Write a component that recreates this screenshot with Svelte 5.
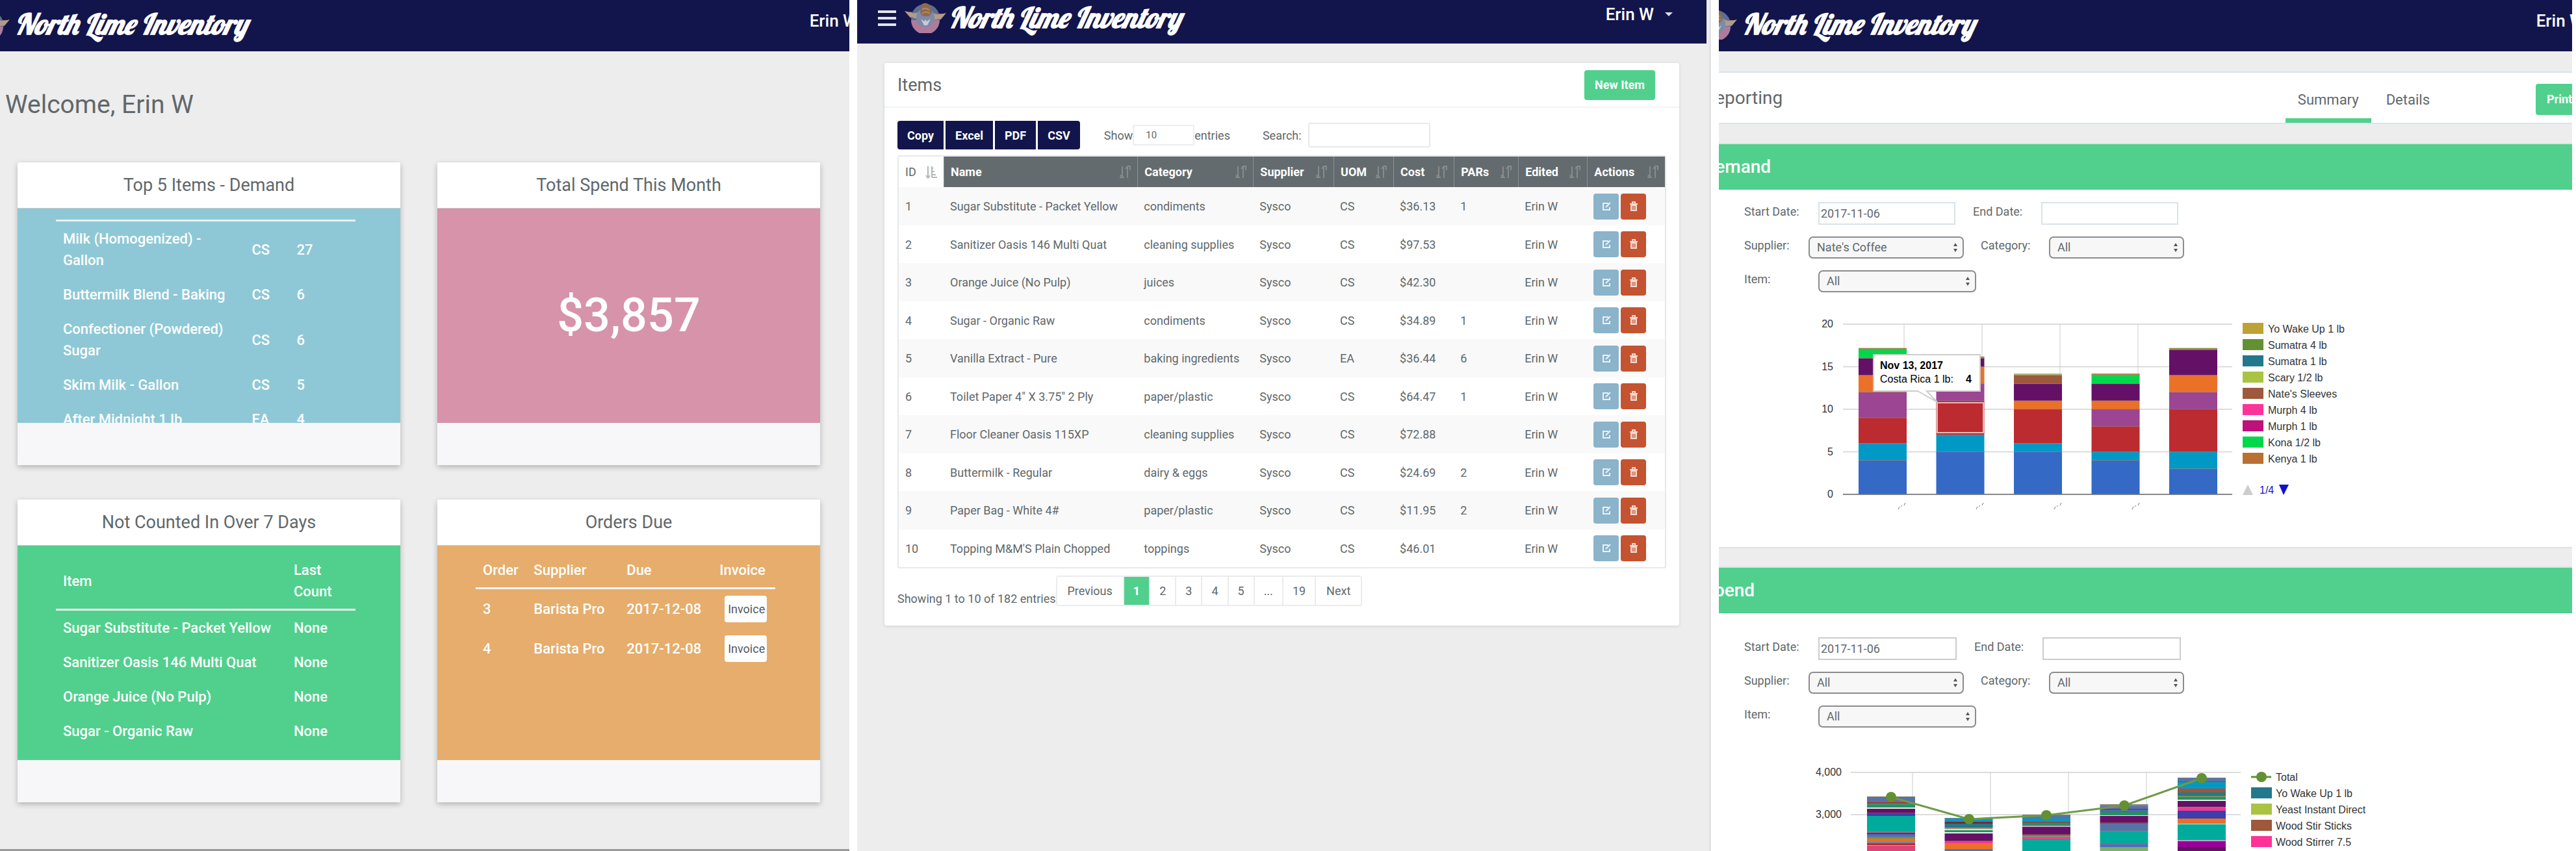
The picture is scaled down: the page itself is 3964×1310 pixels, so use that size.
<script>
  const demand = [
    ['Milk (Homogenized) - Gallon', 'CS', 27],
    ['Buttermilk Blend - Baking', 'CS', 6],
    ['Confectioner (Powdered) Sugar', 'CS', 6],
    ['Skim Milk - Gallon', 'CS', 5],
    ['After Midnight 1 lb', 'EA', 4],
  ];
  const notCounted = [
    'Sugar Substitute - Packet Yellow',
    'Sanitizer Oasis 146 Multi Quat',
    'Orange Juice (No Pulp)',
    'Sugar - Organic Raw',
  ];
  const orders = [
    [3, 'Barista Pro', '2017-12-08'],
    [4, 'Barista Pro', '2017-12-08'],
  ];
  const headers = ['ID', 'Name', 'Category', 'Supplier', 'UOM', 'Cost', 'PARs', 'Edited', 'Actions'];
  const items = [
    [1, 'Sugar Substitute - Packet Yellow', 'condiments', 'Sysco', 'CS', '$36.13', '1', 'Erin W'],
    [2, 'Sanitizer Oasis 146 Multi Quat', 'cleaning supplies', 'Sysco', 'CS', '$97.53', '', 'Erin W'],
    [3, 'Orange Juice (No Pulp)', 'juices', 'Sysco', 'CS', '$42.30', '', 'Erin W'],
    [4, 'Sugar - Organic Raw', 'condiments', 'Sysco', 'CS', '$34.89', '1', 'Erin W'],
    [5, 'Vanilla Extract - Pure', 'baking ingredients', 'Sysco', 'EA', '$36.44', '6', 'Erin W'],
    [6, 'Toilet Paper 4" X 3.75" 2 Ply', 'paper/plastic', 'Sysco', 'CS', '$64.47', '1', 'Erin W'],
    [7, 'Floor Cleaner Oasis 115XP', 'cleaning supplies', 'Sysco', 'CS', '$72.88', '', 'Erin W'],
    [8, 'Buttermilk - Regular', 'dairy & eggs', 'Sysco', 'CS', '$24.69', '2', 'Erin W'],
    [9, 'Paper Bag - White 4#', 'paper/plastic', 'Sysco', 'CS', '$11.95', '2', 'Erin W'],
    [10, "Topping M&M'S Plain Chopped", 'toppings', 'Sysco', 'CS', '$46.01', '', 'Erin W'],
  ];
  const pages = ['Previous', '1', '2', '3', '4', '5', '...', '19', 'Next'];

  const blue = '#3469c6', cyan = '#0099c6', red = '#bc2b2f', purple = '#9b4593';
  const orange = '#eb7128', plum = '#651067', green = '#00d84b', olive = '#8f8f45', brown = '#9e583c';
  const stacks = [
    [[blue, 4], [cyan, 2], [red, 3], [purple, 3], [orange, 2], [plum, 2], [green, 1], [olive, 0.2]],
    [[blue, 5], [cyan, 2], [red, 4], [purple, 2], [orange, 2], [plum, 1], [olive, 0.2]],
    [[blue, 5], [cyan, 1], [red, 4], [orange, 1], [plum, 2], [brown, 1], ['#a9b873', 0.2]],
    [[blue, 4], [cyan, 1], [red, 3], [purple, 2], [orange, 1], [plum, 2], [green, 1], ['#a28c55', 0.2]],
    [[blue, 3], [cyan, 2], [red, 5], [purple, 2], [orange, 2], [plum, 3], [olive, 0.2]],
  ];
  const unit = 13.1;
  const demandBars = stacks.map((stack, i) => {
    let total = 0;
    return {
      x: 60 + i * 119.5,
      parts: stack.map(([fill, n]) => {
        total += n;
        return { fill, y: 283 - total * unit, h: n * unit };
      }),
    };
  });
  const demandLegend = [
    ['Yo Wake Up 1 lb', '#bea237'], ['Sumatra 4 lb', '#649034'], ['Sumatra 1 lb', '#23788c'],
    ['Scary 1/2 lb', '#a9c343'], ["Nate's Sleeves", '#9e583c'], ['Murph 4 lb', '#fd3399'],
    ['Murph 1 lb', '#bd117c'], ['Kona 1/2 lb', '#00d84b'], ['Kenya 1 lb', '#b97030'],
  ];

  const slate = '#5574a5', teal = '#00ab9b', jade = '#229367', gray = '#8b7f78', sky = '#0099c6';
  const spendStacks = [
    { top: 48, parts: [[gray, 1], [slate, 8], [red, 2], [gray, 1], [jade, 5], ['#e4efe9', 2], [plum, 6], ['#8a4a56', 1], ['#3b3eac', 4], [teal, 24], [gray, 2], ['#990099', 2], ['#4372c4', 4], ['#7b8f45', 3], [orange, 4], ['#8084a0', 3], [red, 3], ['#c9a58d', 1], ['#dd4477', 60]] },
    { top: 81, parts: [[gray, 1], [sky, 5], ['#7b2c22', 3], ['#23788c', 6], ['#a88a70', 2], ['#cfe6dc', 2], [jade, 3], ['#e4efe9', 2], [plum, 11], ['#8a4a56', 1], ['#fd3399', 3], [orange, 9], [slate, 60]] },
    { top: 76, parts: [[gray, 1], [slate, 5], [sky, 5], ['#84504a', 2], [jade, 4], ['#c7a4c3', 2], [plum, 11], ['#8a4a56', 2], ['#7b8f78', 3], ['#dd4488', 3], [teal, 60]] },
    { top: 60, parts: [[gray, 3], [slate, 4], ['#6633cc', 2], ['#5574a5', 2], ['#84504a', 1], [jade, 5], ['#e4efe9', 1], [plum, 10], ['#8a4a56', 2], [slate, 11], [gray, 1], [teal, 18], ['#8a6a80', 2], ['#4372c4', 4], ['#7fb06a', 60]] },
    { top: 19, parts: [[gray, 1], [slate, 5], ['#84504a', 1], [sky, 10], ['#c8452c', 3], ['#7c6440', 3], ['#23788c', 5], ['#7b8f55', 2], [jade, 4], ['#e4efe9', 2], [plum, 9], ['#7b8f55', 2], ['#fd3399', 4], ['#3b3eac', 12], [orange, 8], ['#c5e0dc', 1], [teal, 24], ['#b9a6cc', 2], ['#990099', 9], [plum, 60]] },
  ];
  const spendBars = spendStacks.map(({ top, parts }, i) => {
    let y = top;
    return {
      x: 53 + i * 119.5,
      parts: parts.map(([fill, h]) => {
        const part = { fill, y, h };
        y += h;
        return part;
      }),
    };
  });
  const totals = [[90, 49], [210, 83], [329, 77], [449, 62], [568, 20]];
  const spendLegend = [
    ['Yo Wake Up 1 lb', '#23788c'], ['Yeast Instant Direct', '#a9c343'],
    ['Wood Stir Sticks', '#9e583c'], ['Wood Stirrer 7.5', '#fd3399'],
  ];
  const reports = [
    { id: 'demand', title: 'Demand', supplier: "Nate's Coffee" },
    { id: 'spend', title: 'Spend', supplier: 'All' },
  ];
</script>

{#snippet brand()}
  <a class="brand" href="#home">
    <svg class="badge" viewBox="0 0 64 48" aria-hidden="true">
      <path d="M0 14 Q10 17 20 15 L22 27 Q10 27 6 21 Z" fill="#b49a88" />
      <path d="M64 17 Q54 20 44 16 L42 29 Q54 31 59 23 Z" fill="#b49a88" />
      <circle cx="32" cy="25" r="22" fill="#5b6f92" />
      <path d="M10 28 A22 22 0 0 0 54 28 L45 28 Q42 38 32 38 Q22 38 19 28 Z" fill="#ae7b9d" />
      <path d="M2 15 Q12 19 21 16 L21 26 Q10 26 2 15 Z M62 18 Q54 21 44 17 L44 27 Q56 29 62 18 Z" fill="#b49a88" />
      <circle cx="32" cy="24" r="14" fill="#7d8ba8" />
      <path d="M26 4 Q32 -1 39 5 L42 16 Q40 23 32 22 Q24 22 24 14 Z" fill="#8a6a55" />
      <path d="M27 12 Q32 7 38 13 M27 18 Q33 13 39 18" stroke="#b78a55" stroke-width="2" fill="none" />
      <path d="M25 26 L30 36 H35 L40 26 L34 30 L32 27 L30 30 Z" fill="#c5cbd8" />
    </svg>
    <span>North Lime Inventory</span>
  </a>
{/snippet}

{#snippet picker(id, value, size)}
  <span class="picker {size}">
    <select {id}><option>{value}</option></select>
    <svg viewBox="0 0 8 16" aria-hidden="true"><path d="M4 1 L7 6 H1 Z M4 15 L1 10 H7 Z" fill="#555" /></svg>
  </span>
{/snippet}

{#snippet cardHead(title)}
  <h2>{title}</h2>
{/snippet}

<div class="board">
  <section class="screen home">
    <header class="topbar clipped">
      {@render brand()}
      <a class="user" href="#account">Erin W</a>
    </header>
    <h1>Welcome, Erin W</h1>
    <div class="cards">
      <article class="card">
        {@render cardHead('Top 5 Items - Demand')}
        <div class="body sky scrolled">
          <table class="plain ruled">
            <colgroup><col class="c64" /><col class="c15" /><col /></colgroup>
            <tbody>
              {#each demand as [name, uom, count]}
                <tr><td>{name}</td><td>{uom}</td><td>{count}</td></tr>
              {/each}
            </tbody>
          </table>
        </div>
        <footer></footer>
      </article>
      <article class="card">
        {@render cardHead('Total Spend This Month')}
        <div class="body pink"><strong>$3,857</strong></div>
        <footer></footer>
      </article>
      <article class="card">
        {@render cardHead('Not Counted In Over 7 Days')}
        <div class="body green">
          <table class="plain">
            <colgroup><col class="c74" /><col /></colgroup>
            <thead><tr><th>Item</th><th>Last<br />Count</th></tr></thead>
            <tbody>
              {#each notCounted as name}
                <tr><td>{name}</td><td>None</td></tr>
              {/each}
            </tbody>
          </table>
        </div>
        <footer></footer>
      </article>
      <article class="card">
        {@render cardHead('Orders Due')}
        <div class="body amber">
          <table class="plain">
            <colgroup><col class="c17" /><col class="c30" /><col class="c30" /><col /></colgroup>
            <thead><tr><th>Order</th><th>Supplier</th><th>Due</th><th>Invoice</th></tr></thead>
            <tbody>
              {#each orders as [id, supplier, due]}
                <tr><td>{id}</td><td>{supplier}</td><td>{due}</td><td class="act"><button class="invoice">Invoice</button></td></tr>
              {/each}
            </tbody>
          </table>
        </div>
        <footer></footer>
      </article>
    </div>
    <div class="edge"></div>
  </section>

  <section class="screen inventory">
    <header class="topbar short">
      <button class="menu" aria-label="Menu">
        <svg viewBox="0 0 28 26" aria-hidden="true"><path d="M0 3 H28 M0 13 H28 M0 23 H28" stroke="#e4e4ec" stroke-width="4" /></svg>
      </button>
      {@render brand()}
      <a class="user" href="#account">Erin W
        <svg viewBox="0 0 12 8" aria-hidden="true"><path d="M0 1 H12 L6 7 Z" fill="#dcdce6" /></svg>
      </a>
    </header>
    <div class="sheet">
      <div class="sheet-head">
        <h2>Items</h2>
        <button class="go">New Item</button>
      </div>
      <div class="sheet-body">
        <div class="tools">
          <div class="exports">
            <button>Copy</button><button>Excel</button><button>PDF</button><button>CSV</button>
          </div>
          <label class="show">Show<select><option>10</option></select>entries</label>
          <label class="search">Search:<input type="search" /></label>
        </div>
        <table class="grid">
          <colgroup>
            <col class="w-id" /><col class="w-name" /><col class="w-cat" /><col class="w-sup" /><col class="w-uom" />
            <col class="w-cost" /><col class="w-par" /><col class="w-edit" /><col class="w-act" />
          </colgroup>
          <thead>
            <tr>
              {#each headers as name, i}
                <th class:sorted={i === 0}>
                  <span class="th">{name}
                    {#if i === 0}
                      <svg viewBox="0 0 18 20" aria-hidden="true"><path d="M4 1 V18 M1 15 L4 19 L7 15 M10 1 V18 M10 4 H12 M10 9 H14 M10 14 H16 M10 18 H18" stroke="#b4b8ba" stroke-width="2" fill="none" /></svg>
                    {:else}
                      <svg viewBox="0 0 18 20" aria-hidden="true"><path d="M5 1 V18 M1 18 H8 M2 14 L5 18 M13 1 V19 M10 5 L13 1 H17 V7" stroke="#868c8e" stroke-width="2" fill="none" /></svg>
                    {/if}
                  </span>
                </th>
              {/each}
            </tr>
          </thead>
          <tbody>
            {#each items as row}
              <tr>
                {#each row as cell}<td>{cell}</td>{/each}
                <td>
                  <span class="acts">
                    <button class="edit" aria-label="Edit item">
                      <svg viewBox="0 0 16 16" aria-hidden="true"><path d="M11 3 H3 V13 H13 V9" stroke="#e9f2f6" stroke-width="2" fill="none" /><path d="M7 9 L14 2" stroke="#e9f2f6" stroke-width="2" /></svg>
                    </button>
                    <button class="trash" aria-label="Delete item">
                      <svg viewBox="0 0 16 16" aria-hidden="true"><path d="M2 4 H14 M6 3 V1 H10 V3" stroke="#f3d7cd" stroke-width="2" fill="none" /><path d="M3 5 H13 V15 H3 Z" fill="#f3d7cd" /><path d="M6 7 V13 M8 7 V13 M10 7 V13" stroke="#c45331" /></svg>
                    </button>
                  </span>
                </td>
              </tr>
            {/each}
          </tbody>
        </table>
        <div class="pager">
          <span>Showing 1 to 10 of 182 entries</span>
          <nav aria-label="Pages">
            {#each pages as page}
              <button class:on={page === '1'} class:word={page.length > 3}>{page}</button>
            {/each}
          </nav>
        </div>
      </div>
    </div>
  </section>

  <section class="screen reporting">
    <header class="topbar clipped far">
      {@render brand()}
      <a class="user" href="#account">Erin W</a>
    </header>
    <div class="title">
      <h1>Reporting</h1>
      <nav>
        <a class="tab on" href="#summary">Summary</a>
        <a class="tab" href="#details">Details</a>
      </nav>
      <button class="go print">Print</button>
    </div>
    {#each reports as report}
      <article class="report {report.id}">
        <h2>{report.title}</h2>
        <form class="filters">
          <div class="line">
            <label class="wide" for="{report.id}-start">Start Date:</label>
            <input id="{report.id}-start" value="2017-11-06" />
            <label for="{report.id}-end" class="end">End Date:</label>
            <input id="{report.id}-end" />
          </div>
          <div class="line">
            <label class="mid" for="{report.id}-supplier">Supplier:</label>
            {@render picker(`${report.id}-supplier`, report.supplier, 'm')}
            <label class="cat" for="{report.id}-category">Category:</label>
            {@render picker(`${report.id}-category`, 'All', 's')}
          </div>
          <div class="line">
            <label class="wide" for="{report.id}-item">Item:</label>
            {@render picker(`${report.id}-item`, 'All', 'l')}
          </div>
        </form>
        {#if report.id === 'demand'}
          <svg class="chart" width="860" height="320" viewBox="0 0 860 320" role="img" aria-label="Demand by week">
            {#each [20, 15, 10, 5, 0] as tick, i}
              <line x1="36" x2="635" y1={21 + i * 65.5} y2={21 + i * 65.5} stroke={tick ? '#dcdcdc' : '#888'} stroke-width="2" />
              <text x="21" y={26 + i * 65.5} text-anchor="end">{tick}</text>
            {/each}
            {#each [130, 250, 370, 490] as x}
              <line x1={x} x2={x} y1="21" y2="282" stroke="#ccc" />
              <path d="M{x - 9} 306 l2 -4 M{x - 5} 302 l2 -2 M{x} 300 l2 -4" stroke="#777" />
            {/each}
            {#each demandBars as bar}
              {#each bar.parts as part}
                <rect x={bar.x} y={part.y} width="74" height={part.h} fill={part.fill} />
              {/each}
              {#each bar.parts.slice(0, -1) as part}
                <line x1={bar.x} x2={bar.x + 74} y1={part.y} y2={part.y} stroke="#90766f" stroke-opacity="0.7" />
              {/each}
            {/each}
            <line x1="36" x2="635" y1="283" y2="283" stroke="#888" stroke-opacity="0.6" />
            <rect x="181" y="142" width="71" height="46" fill="none" stroke="#e6b9ba" stroke-width="2" />
            <path d="M83 68 H247 V124 H165 L181 141 L151 124 H83 Z" fill="#fff" stroke="#ccc" stroke-width="2" />
            <text class="dark" x="93" y="90" font-weight="700">Nov 13, 2017</text>
            <text class="dark" x="93" y="111">Costa Rica 1 lb:</text>
            <text class="dark" x="225" y="111" font-weight="700">4</text>
            {#each demandLegend as [name, fill], i}
              <rect x="651" y={19 + i * 25} width="32" height="17" {fill} />
              <text x="690" y={34 + i * 25}>{name}</text>
            {/each}
            <path d="M651 284 L659 268 L667 284 Z" fill="#ccc" />
            <text class="count" x="677" y="282">1/4</text>
            <path d="M707 268 H722 L714 284 Z" fill="#1111cc" />
          </svg>
        {:else}
          <svg class="chart" width="860" height="320" viewBox="0 0 860 320" role="img" aria-label="Spend by week">
            {#each ['4,000', '3,000', '2,000', '1,000', '0'] as tick, i}
              <line x1="28" x2="628" y1={11 + i * 65} y2={11 + i * 65} stroke="#dcdcdc" stroke-width="2" />
              <text x="14" y={16 + i * 65} text-anchor="end">{tick}</text>
            {/each}
            {#each [123, 243, 363, 483] as x}
              <line x1={x} x2={x} y1="11" y2="271" stroke="#ccc" />
            {/each}
            {#each spendBars as bar}
              {#each bar.parts as part}
                <rect x={bar.x} y={part.y} width="74" height={part.h} fill={part.fill} />
              {/each}
            {/each}
            <polyline points={totals.map((p) => p.join(',')).join(' ')} fill="none" stroke="#6f9b46" stroke-width="3" />
            {#each totals as [x, y]}
              <circle cx={x} cy={y} r="8" fill="#649034" />
            {/each}
            <line x1="644" x2="675" y1="18" y2="18" stroke="#649034" stroke-width="3" />
            <circle cx="660" cy="18" r="8" fill="#649034" />
            <text x="682" y="24">Total</text>
            {#each spendLegend as [name, fill], i}
              <rect x="644" y={34 + i * 25} width="32" height="17" {fill} />
              <text x="682" y={49 + i * 25}>{name}</text>
            {/each}
          </svg>
        {/if}
      </article>
    {/each}
  </section>
</div>

<style>
  :global(body) {
    margin: 0;
    background: #fff;
    font-family: Roboto, "Liberation Sans", sans-serif;
    color: #5f686b;
  }
  .board {
    display: grid;
    grid-template-columns: 1307fr 1314fr 1313fr;
    column-gap: 12px;
    box-sizing: border-box;
    height: 100vh;
    padding-right: 6px;
    overflow: hidden;
  }
  .screen {
    display: flex;
    flex-direction: column;
    min-width: 0;
    min-height: 0;
    overflow: hidden;
    background: #ededed;
    font-size: 18px;
  }
  .inventory { border-right: 3px solid #e3e3e3; }
  h1, h2 { margin: 0; font-weight: 400; }
  a { color: inherit; text-decoration: none; }
  button, input, select { font: inherit; color: inherit; margin: 0; box-sizing: border-box; }
  button { border: 0; cursor: pointer; }
  table { border-collapse: collapse; table-layout: fixed; width: 100%; }
  th, td { text-align: left; }

  .topbar {
    display: flex;
    align-items: flex-start;
    justify-content: space-between;
    flex: none;
    box-sizing: border-box;
    height: 79px;
    padding: 12px 0 0;
    background: #12154b;
    color: #fff;
    white-space: nowrap;
  }
  .brand {
    display: flex;
    align-items: center;
    gap: 8px;
    height: 50px;
    font: italic 700 44px/50px Lobster, "Liberation Serif", serif;
  }
  .badge { width: 64px; height: 48px; }
  .user { font-size: 26px; line-height: 40px; font-weight: 500; }
  .clipped .brand { margin-left: -49px; }
  .clipped .user { margin-right: -13px; }
  .far .brand { margin-left: -36px; }
  .far .user { margin-right: -19px; }
  .short { height: 67px; margin-right: 4px; padding: 2px 52px 0 32px; justify-content: flex-start; }
  .short .brand { margin-left: 13px; gap: 4px; }
  .short .user { margin-left: auto; display: flex; align-items: center; gap: 17px; }
  .short .user svg { width: 12px; height: 8px; }
  .menu { background: none; padding: 12px 0 0; height: 40px; }
  .menu svg { display: block; width: 28px; height: 26px; }

  .home h1 { font-size: 39px; line-height: 50px; padding: 57px 8px 64px; }
  .cards {
    display: grid;
    grid-template-columns: 1fr 1fr;
    gap: 53px 57px;
    padding: 0 45px 0 27px;
  }
  .card {
    background: #fff;
    box-shadow: 0 3px 8px rgba(0, 0, 0, 0.25);
    border-radius: 2px;
  }
  .card h2 { font-size: 27px; line-height: 70px; text-align: center; }
  .card footer { height: 65px; background: #f7f7f9; }
  .body {
    box-sizing: border-box;
    height: 331px;
    padding: 12px 69px 0 59px;
    overflow: hidden;
    color: #fff;
    box-shadow: inset 0 1px #ccc;
  }
  .scrolled { padding-top: 18px; }
  .sky { background: #8ec8d6; }
  .pink { background: #d693a9; display: grid; place-items: center; padding: 0; }
  .green { background: #50d08c; }
  .amber { background: #e6ad6c; }
  .pink strong { font-size: 72px; font-weight: 500; }
  .plain { font-size: 22px; line-height: 33px; font-weight: 500; }
  .plain th { padding: 10px 0 10px 11px; font-weight: 500; border-bottom: 3px solid #f4f4f4; }
  .plain td { padding: 10px 0 10px 11px; }
  .ruled { border-top: 3px solid #e6f1f4; }
  .plain .act { padding: 10px 0 10px 19px; }
  .c64 { width: 63%; }
  .c15 { width: 15%; }
  .c74 { width: 77%; }
  .c17 { width: 17%; }
  .c30 { width: 31%; }
  .invoice {
    display: block;
    width: 65px;
    height: 41px;
    padding: 0 0 0 2px;
    background: #fff;
    border-radius: 4px;
    font-size: 18px;
    font-weight: 400;
    color: #55595c;
  }
  .edge { margin-top: auto; height: 3px; background: #999; }

  .go {
    background: #50d08c;
    color: #fff;
    border-radius: 4px;
    font-weight: 700;
    height: 46px;
  }
  .sheet {
    margin: 30px 46px 0 42px;
    background: #fff;
    border-radius: 3px;
    box-shadow: 0 1px 4px rgba(150, 165, 175, 0.4);
  }
  .sheet-head {
    display: flex;
    align-items: center;
    justify-content: space-between;
    height: 67px;
    padding: 0 37px 0 20px;
    border-bottom: 2px solid #eff3f7;
  }
  .sheet-head h2 { font-size: 27px; }
  .sheet-head .go { width: 109px; }
  .sheet-body { padding: 20px 20px 30px; }
  .tools { display: flex; align-items: center; }
  .exports { display: flex; gap: 3px; border-radius: 4px; overflow: hidden; }
  .exports button {
    height: 44px;
    padding: 0 15px;
    background: #12154b;
    color: #fff;
    font-weight: 700;
  }
  .show, .search { display: flex; align-items: center; }
  .show { margin-left: 37px; }
  .search { margin-left: 50px; gap: 10px; }
  .show select {
    appearance: none;
    width: 95px;
    height: 32px;
    padding: 0 18px;
    border: 2px solid #eceded;
    background: #fff;
    border-radius: 2px;
    font-size: 15px;
  }
  .search input {
    appearance: none;
    width: 188px;
    height: 38px;
    border: 2px solid #e8e9ea;
    border-radius: 3px;
    background: #fff;
  }
  .grid { margin-top: 9px; border: 2px solid #e6e8e9; border-collapse: separate; border-spacing: 0; border-radius: 3px; font-size: 18px; }
  .grid th {
    height: 47px;
    padding: 0 10px;
    background: #646b6e;
    color: #fff;
    font-size: 18px;
    font-weight: 700;
    border-left: 1px solid #8a9092;
    box-sizing: border-box;
  }
  .grid th.sorted { background: #fff; color: #5f686b; font-weight: 400; border-left: 0; }
  .th { display: flex; align-items: center; justify-content: space-between; }
  .th svg { width: 18px; height: 20px; flex: none; }
  .grid td { padding: 0 0 0 10px; height: 59px; box-sizing: border-box; white-space: nowrap; }
  .grid tbody tr:nth-child(even) td { height: 58px; }
  .grid tbody tr:nth-child(odd) { background: #f9f9f9; }
  .w-id { width: 69px; }
  .w-name { width: 25.3%; }
  .w-cat { width: 15.1%; }
  .w-sup { width: 10.5%; }
  .w-uom { width: 7.8%; }
  .w-cost { width: 7.9%; }
  .w-par { width: 8.4%; }
  .w-edit { width: 9%; }
  .acts { display: flex; gap: 3px; }
  .acts button {
    display: grid;
    place-items: center;
    width: 39px;
    height: 40px;
    padding: 0;
    border-radius: 4px;
  }
  .acts svg { width: 16px; height: 16px; }
  .edit { background: #8bb3ca; }
  .trash { background: #c45331; }
  .pager { display: flex; align-items: center; padding-top: 11px; }
  .pager > span { padding-top: 24px; }
  .pager nav { display: flex; border: 2px solid #ececec; border-radius: 4px; }
  .pager nav button {
    height: 43px;
    padding: 0 14px;
    background: #fff;
    border-right: 2px solid #ececec;
  }
  .pager nav .word { padding: 0 16px; }
  .pager nav button:last-child { border-right: 0; }
  .pager nav button.on { background: #50d08c; color: #fff; font-weight: 700; }

  .title {
    display: flex;
    align-items: center;
    flex: none;
    height: 81px;
    margin: 31px -36px 31px -25px;
    background: #fff;
    border: 2px solid #d8e3ea;
    box-sizing: border-box;
  }
  .title h1 { font-size: 28px; }
  .title nav { display: flex; align-items: stretch; align-self: stretch; gap: 4px; margin-left: auto; font-size: 22px; }
  .tab { display: flex; align-items: center; padding: 12px 19px 0; border-bottom: 7px solid transparent; }
  .title .on { border-color: #50d08c; }
  .print { margin: 4px 0 0 144px; width: 90px; height: 48px; text-align: left; padding: 0 17px; }
  .report {
    flex: none;
    margin: 0 -36px 32px -24px;
    background: #fff;
    box-shadow: 0 0 0 2px #d8e3ea;
  }
  .report h2 { background: #50d08c; color: #fff; font-size: 28px; font-weight: 500; line-height: 70px; }
  .filters { padding: 19px 0 0 63px; }
  .spend .filters { padding-top: 37px; }
  .line { display: flex; align-items: center; height: 35px; margin-bottom: 17px; }
  .line label { flex: none; padding-bottom: 6px; }
  .wide { width: 114px; }
  .mid { width: 99px; }
  .end { width: 79px; margin: 0 26px 0 27px; }
  .cat { width: 79px; margin: 0 26px; }
  .line input {
    width: 211px;
    height: 35px;
    padding: 0 2px;
    border: 2px solid #d8e3ea;
    background: #fff;
  }
  .spend .line input { width: 213px; border-color: #ccc; }
  .picker { position: relative; display: block; height: 34px; }
  .picker select {
    appearance: none;
    width: 100%;
    height: 34px;
    padding: 0 11px;
    border: 2px solid #8c8c8c;
    border-radius: 7px;
    background: #f7f7f7;
  }
  .picker svg { position: absolute; right: 9px; top: 9px; width: 8px; height: 16px; }
  .m { width: 239px; }
  .s { width: 208px; }
  .l { width: 243px; }
  .chart {
    display: block;
    overflow: visible;
    margin: 28px 0 0 179px;
    font-family: "Liberation Sans", sans-serif;
    font-size: 16px;
  }
  .demand .chart { margin-bottom: 44px; }
  .spend .chart { margin-top: 58px; margin-left: 199px; }
  .chart text { fill: #333; }
  .chart .dark { fill: #000; }
  .chart .count { fill: #1111cc; }
</style>
